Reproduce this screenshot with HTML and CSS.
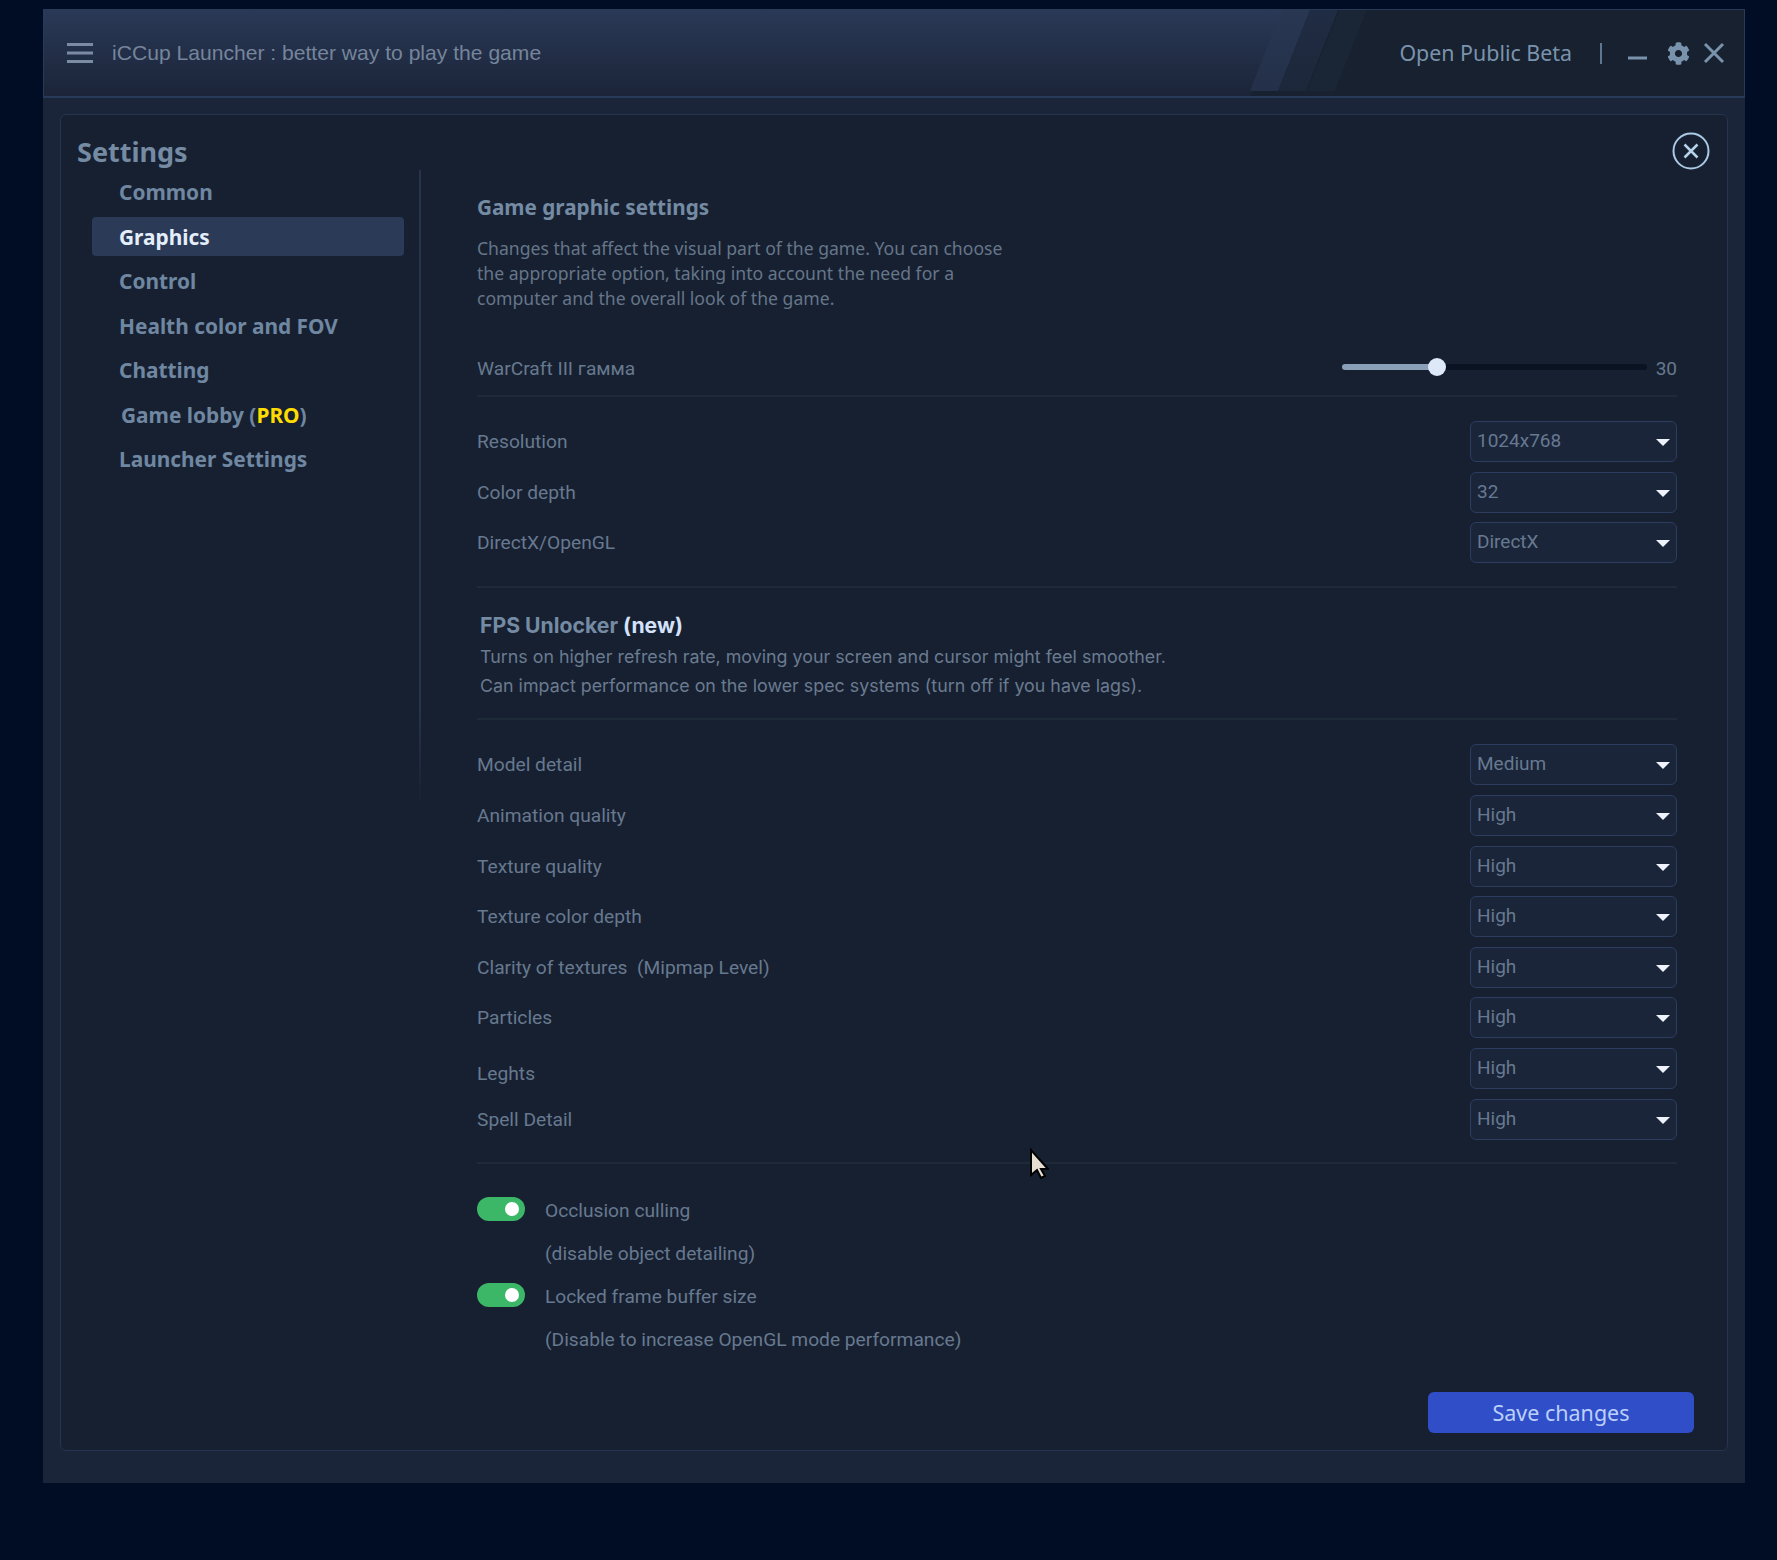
FILE: index.html
```html
<!DOCTYPE html>
<html lang="en">
<head>
    <meta charset="UTF-8">
    <meta name="viewport" content="width=device-width, initial-scale=1.0">
    <title>iCCup Launcher</title>
    <link rel="stylesheet" href="styles.css">
</head>
<body>
    <div class="window">
        <div class="header">
            <div class="header-bg"></div>
            <div class="stripe stripe-a"></div>
            <div class="stripe stripe-b"></div>
            <div class="stripe stripe-c"></div>
            <svg class="burger" width="28" height="22" viewBox="0 0 28 22"><path d="M1 2.500h26M1 11h26M1 19.500h26" stroke="#7a8ba3" stroke-width="3"/></svg>
            <div class="title">iCCup Launcher : better way to play the game</div>
            <div class="beta">Open Public Beta</div>
            <div class="sep"></div>
            <svg class="min" width="19" height="21" viewBox="0 0 19 21"><path d="M0 15h19" stroke="#7a93ad" stroke-width="3"/></svg>
            <svg class="gear" width="23" height="23" viewBox="0 0 512 512"><path fill="#7a93ad" d="M487.400 315.700l-42.600-24.600c4.300-23.200 4.300-47 0-70.200l42.600-24.600c4.900-2.800 7.100-8.600 5.500-14-11.100-35.600-30-67.800-54.700-94.600-3.800-4.100-10-5.100-14.800-2.300L380.800 110c-17.900-15.400-38.500-27.300-60.800-35.100V25.800c0-5.600-3.900-10.500-9.400-11.700-36.700-8.200-74.300-7.800-109.200 0-5.500 1.200-9.400 6.100-9.400 11.700V75c-22.200 7.900-42.800 19.800-60.800 35.100L88.700 85.500c-4.900-2.800-11-1.900-14.800 2.300-24.700 26.700-43.600 58.900-54.700 94.600-1.700 5.400.6 11.200 5.500 14L67.300 221c-4.300 23.200-4.300 47 0 70.200l-42.600 24.600c-4.900 2.800-7.100 8.600-5.500 14 11.100 35.600 30 67.800 54.700 94.600 3.800 4.100 10 5.100 14.800 2.300l42.600-24.600c17.900 15.400 38.500 27.300 60.800 35.100v49.200c0 5.600 3.900 10.500 9.400 11.700 36.700 8.200 74.300 7.800 109.200 0 5.500-1.200 9.400-6.100 9.400-11.700v-49.200c22.200-7.900 42.800-19.800 60.800-35.100l42.600 24.600c4.900 2.800 11 1.900 14.800-2.300 24.700-26.700 43.600-58.900 54.700-94.600 1.500-5.500-.7-11.300-5.600-14.100zM256 336c-44.100 0-80-35.900-80-80s35.900-80 80-80 80 35.900 80 80-35.900 80-80 80z"/></svg>
            <svg class="close" width="22" height="22" viewBox="0 0 22 22"><path d="M2 2l18 18M20 2L2 20" stroke="#7a93ad" stroke-width="3"/></svg>
        </div>

        <div class="panel">
            <svg class="panel-close" width="38" height="38" viewBox="0 0 38 38"><circle cx="19" cy="19" r="17.500" fill="none" stroke="#a9c9e4" stroke-width="2"/><path d="M12.500 12.500l13 13M25.500 12.500l-13 13" stroke="#b6d3ea" stroke-width="2.500"/></svg>

            <div class="sidebar">
                <h1 class="settings-title">Settings</h1>
                <div class="menu">
                    <div class="menu-item">Common</div>
                    <div class="menu-item active">Graphics</div>
                    <div class="menu-item">Control</div>
                    <div class="menu-item">Health color and FOV</div>
                    <div class="menu-item">Chatting</div>
                    <div class="menu-item lobby">Game lobby (<span class="pro">PRO</span>)</div>
                    <div class="menu-item">Launcher Settings</div>
                </div>
            </div>

            <div class="main">
                <h2 class="section-title">Game graphic settings</h2>
                <p class="section-desc">Changes that affect the visual part of the game. You can choose<br>the appropriate option, taking into account the need for a<br>computer and the overall look of the game.</p>

                <div class="slider-row">
                    <span class="label slider-label">WarCraft III гамма</span>
                    <div class="slider"><div class="slider-fill"></div><div class="slider-thumb"></div></div>
                    <span class="slider-value">30</span>
                </div>

                <div class="rows rows-top">
                    <div class="row"><span class="label">Resolution</span><div class="select">1024x768</div></div>
                    <div class="row"><span class="label">Color depth</span><div class="select">32</div></div>
                    <div class="row"><span class="label">DirectX/OpenGL</span><div class="select">DirectX</div></div>
                </div>

                <div class="fps">
                    <h3 class="fps-title">FPS Unlocker <span class="fps-new">(new)</span></h3>
                    <p class="fps-desc">Turns on higher refresh rate, moving your screen and cursor might feel smoother.</p>
                    <p class="fps-desc">Can impact performance on the lower spec systems (turn off if you have lags).</p>
                </div>

                <div class="rows rows-detail">
                    <div class="row"><span class="label">Model detail</span><div class="select">Medium</div></div>
                    <div class="row"><span class="label">Animation quality</span><div class="select">High</div></div>
                    <div class="row"><span class="label">Texture quality</span><div class="select">High</div></div>
                    <div class="row"><span class="label">Texture color depth</span><div class="select">High</div></div>
                    <div class="row"><span class="label">Clarity of textures&nbsp; (Mipmap Level)</span><div class="select">High</div></div>
                    <div class="row"><span class="label">Particles</span><div class="select">High</div></div>
                    <div class="row"><span class="label label-low">Leghts</span><div class="select">High</div></div>
                    <div class="row"><span class="label">Spell Detail</span><div class="select">High</div></div>
                </div>

                <div class="toggles">
                    <div class="toggle-row"><div class="toggle"></div><span class="label toggle-label">Occlusion culling</span></div>
                    <div class="toggle-note label">(disable object detailing)</div>
                    <div class="toggle-row"><div class="toggle"></div><span class="label toggle-label">Locked frame buffer size</span></div>
                    <div class="toggle-note label">(Disable to increase OpenGL mode performance)</div>
                </div>

                <button class="save">Save changes</button>
            </div>
        </div>
    </div>

    <svg class="cursor" width="20" height="32" viewBox="0 0 20 32"><path d="M2 2v25l6-5 4 8 4-2-4-7h7z" fill="#e6ddd2" stroke="#000" stroke-width="2"/></svg>
</body>
</html>
```

FILE: styles.css
```css
* {
    box-sizing: border-box;
}
html, body {
    margin: 0;
    height: 100%;
}
body {
    background-color: #010c25;
    padding: 9px 0 0 43px;
    font-family: "Liberation Sans", Arial, sans-serif;
    position: relative;
}
.window {
    width: 1702px;
    height: 1474px;
    background-color: #1a253a;
    padding-bottom: 32px;
    display: flex;
    flex-direction: column;
}
.header {
    position: relative;
    height: 89px;
    flex-shrink: 0;
    display: flex;
    align-items: center;
    padding: 0 19px 0 22px;
    background-color: #17212f;
    border: 1px solid #273a58;
    border-bottom-width: 2px;
    overflow: hidden;
}
.header-bg {
    position: absolute;
    left: 0;
    top: 0;
    bottom: 0;
    width: 1240px;
    background: linear-gradient(#2a3957, #1b2438);
    clip-path: polygon(0 0, 100% 0, 1206px 100%, 0 100%);
}
.stripe {
    position: absolute;
    top: 0;
    width: 60px;
    height: 81px;
    clip-path: polygon(32px 0, 100% 0, 28px 100%, 0 100%);
}
.stripe-a {
    left: 1206px;
    background: linear-gradient(#293753, #243049);
}
.stripe-b {
    left: 1234px;
    background: linear-gradient(#202c43, #1c273a);
}
.stripe-c {
    left: 1263px;
    background-color: #1a2535;
}
.burger, .title, .beta, .sep, .min, .gear, .close {
    position: relative;
}
.title {
    margin-left: 18px;
    color: #75859b;
    font-size: 21.100px;
}
.beta {
    margin-left: auto;
    margin-bottom: 2px;
    font-family: "Noto Sans", sans-serif;
    font-size: 21.400px;
    color: #7a93ad;
}
.sep {
    width: 2px;
    height: 21px;
    margin-left: 28px;
    background-color: #5f7690;
}
.min {
    margin-left: 26px;
}
.gear {
    margin-left: 20px;
}
.close {
    margin-left: 13px;
}

.panel {
    position: relative;
    flex: 1;
    margin: 16px 17px 0;
    background-color: #172031;
    border: 1px solid #26344f;
    border-radius: 6px;
    display: flex;
    font-family: "Noto Sans", sans-serif;
}
.panel-close {
    position: absolute;
    right: 17px;
    top: 17px;
}
.sidebar {
    width: 360px;
    flex-shrink: 0;
    padding: 19px 0 0 16px;
    position: relative;
}
.sidebar::after {
    content: "";
    position: absolute;
    right: 0;
    top: 55px;
    width: 2px;
    height: 636px;
    background: linear-gradient(#26344f 85%, transparent);
}
.settings-title {
    margin: 0;
    font-size: 27px;
    line-height: 36px;
    font-weight: 700;
    color: #748ba3;
}
.menu {
    margin: 0 17px 0 15px;
}
.menu-item {
    height: 44.500px;
    line-height: 45.500px;
    padding-left: 27px;
    font-size: 20.860px;
    font-weight: 700;
    color: #6f87a1;
    border-radius: 4px;
}
.menu-item.active {
    height: 39px;
    margin: 2.500px 0 3px;
    line-height: 40.500px;
    background-color: #2a3a57;
    color: #e5eefb;
}
.menu-item.lobby {
    padding-left: 29px;
    line-height: 44px;
}
.pro {
    color: #fedc00;
}

.main {
    flex: 1;
    display: flex;
    flex-direction: column;
    padding: 0 50px 0 56px;
}
.section-title {
    margin: 79px 0 0;
    font-size: 20.700px;
    line-height: 27px;
    font-weight: 700;
    color: #748ba3;
}
.section-desc {
    margin: 15px 0 0;
    font-size: 17.600px;
    line-height: 25px;
    color: #667689;
}
.label {
    font-family: Roboto, sans-serif;
    font-size: 19.200px;
    color: #67798f;
}
.slider-row {
    display: flex;
    align-items: center;
    height: 48px;
    margin-top: 37.800px;
    padding-bottom: 9px;
    border-bottom: 2px solid #1e2a38;
    justify-content: space-between;
}
.slider-label {
    padding-top: 3.400px;
}
.slider {
    position: relative;
    width: 305px;
    height: 6px;
    margin: 0 0 0 auto;
    background-color: #0a1322;
    border-radius: 3px;
}
.slider-fill {
    width: 94px;
    height: 100%;
    background-color: #8aa0b8;
    border-radius: 3px;
}
.slider-thumb {
    position: absolute;
    left: 86px;
    top: -6px;
    width: 18px;
    height: 18px;
    border-radius: 50%;
    background-color: #dde9f9;
}
.slider-value {
    margin-left: 9px;
    padding-top: 2px;
    font-family: Roboto, sans-serif;
    font-size: 19px;
    color: #67798f;
}
.rows {
    display: flex;
    flex-direction: column;
    gap: 10px;
}
.rows-top {
    padding: 24.500px 0 22.500px;
    border-bottom: 2px solid #1e2a38;
}
.rows-detail {
    padding-top: 25px;
    padding-bottom: 23px;
    border-bottom: 2px solid #1e2a38;
}
.row {
    display: flex;
    align-items: center;
    justify-content: space-between;
    height: 40.600px;
}
.label-low {
    padding-top: 10px;
}
.select {
    position: relative;
    width: 207px;
    height: 41px;
    padding-left: 6px;
    line-height: 38px;
    font-family: Roboto, sans-serif;
    font-size: 19px;
    color: #67798f;
    background-color: #1a253a;
    border: 1.500px solid #2c3d60;
    border-radius: 6px;
}
.select::after {
    content: "";
    position: absolute;
    right: 6px;
    top: 17px;
    border-left: 7px solid transparent;
    border-right: 7px solid transparent;
    border-top: 7px solid #eef3fb;
}
.fps {
    padding: 23px 0 17px 3px;
    border-bottom: 2px solid #1e2a38;
    font-family: Inter, sans-serif;
}
.fps-title {
    margin: 0 0 3px;
    font-size: 21.200px;
    line-height: 28px;
    font-weight: 700;
    color: #748ba3;
}
.fps-new {
    color: #d5e2fb;
}
.fps-desc {
    margin: 0;
    font-size: 17.850px;
    line-height: 29.500px;
    color: #6a7b90;
}
.toggles {
    padding-top: 23px;
}
.toggle-row {
    display: flex;
    align-items: center;
    height: 43px;
}
.toggle {
    position: relative;
    width: 48px;
    height: 24px;
    margin-right: 20px;
    background-color: #3cb767;
    border-radius: 12px;
}
.toggle::after {
    content: "";
    position: absolute;
    right: 6px;
    top: 5px;
    width: 14px;
    height: 14px;
    background-color: #fff;
    border-radius: 50%;
}
.toggle-label {
    padding-top: 4px;
}
.toggle-note {
    height: 43px;
    line-height: 47.500px;
    padding-left: 68px;
}
.save {
    align-self: flex-end;
    margin: auto -17px 17px 0;
    width: 266px;
    height: 41px;
    flex-shrink: 0;
    border: 0;
    border-radius: 6px;
    background-color: #2f4ec8;
    color: #bcd0fb;
    font-family: "Noto Sans", sans-serif;
    font-size: 21.500px;
}
.cursor {
    position: absolute;
    left: 1029px;
    top: 1148px;
}
```
